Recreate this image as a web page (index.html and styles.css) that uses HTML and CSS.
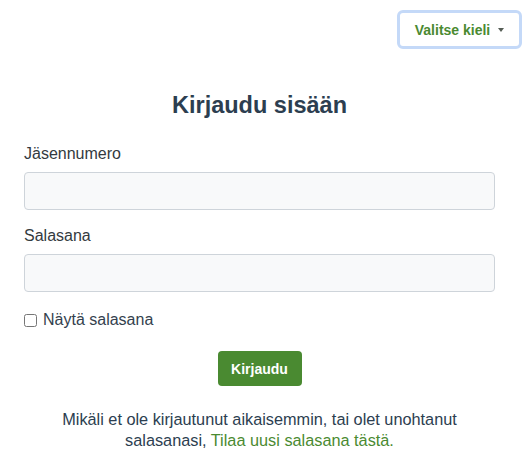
FILE: index.html
```html
<!DOCTYPE html>
<html lang="fi">
<head>
<meta charset="utf-8">
<title>Kirjaudu sisään</title>
<link rel="stylesheet" href="styles.css">
</head>
<body>
<header class="topbar">
  <button class="lang-btn" type="button">Valitse kieli <span class="caret"></span></button>
</header>
<main class="content">
  <h1 class="title">Kirjaudu sisään</h1>
  <form class="login-form">
    <label class="field-label" for="member">Jäsennumero</label>
    <input class="field-input" id="member" type="text">
    <label class="field-label" for="pass">Salasana</label>
    <input class="field-input" id="pass" type="password">
    <label class="check-row"><input class="check-box" type="checkbox"> Näytä salasana</label>
    <div class="submit-row"><button class="submit-btn" type="button">Kirjaudu</button></div>
  </form>
  <p class="note">Mikäli et ole kirjautunut aikaisemmin, tai olet unohtanut<br>salasanasi, <a class="note-link" href="#">Tilaa uusi salasana tästä.</a></p>
</main>
</body>
</html>
```

FILE: styles.css
```css
* { box-sizing: border-box; }
html, body { margin: 0; padding: 0; background: #fff; }
body {
  font-family: "Liberation Sans", Arial, sans-serif;
  color: #2c3e50;
  font-size: 16px;
  width: 531px;
}
.topbar {
  display: flex;
  justify-content: flex-end;
  padding: 10px 9px 0 0;
}
.lang-btn {
  display: flex;
  align-items: center;
  gap: 8px;
  height: 39px;
  width: 125px;
  justify-content: center;
  border: 3px solid #c4d9f8;
  border-radius: 6px;
  background: #fff;
  color: #4a8a31;
  font-family: "Liberation Sans", Arial, sans-serif;
  font-weight: bold;
  font-size: 14px;
  padding: 0 8px;
}
.caret {
  width: 0;
  height: 0;
  border-left: 3.5px solid transparent;
  border-right: 3.5px solid transparent;
  border-top: 4px solid #555d55;
  margin-top: 1px;
}
.content {
  padding: 0 36px 0 24px;
}
.title {
  margin: 41px 0 0;
  text-align: center;
  font-size: 23.5px;
  line-height: 30px;
  font-weight: bold;
  color: #2c3e50;
}
.login-form {
  display: flex;
  flex-direction: column;
  margin-top: 22px;
}
.field-label {
  font-size: 16px;
  line-height: 24px;
  color: #333a40;
  margin-bottom: 6px;
}
.field-input {
  height: 38px;
  border: 1px solid #ced4da;
  border-radius: 4px;
  background: #f8f9fa;
  margin: 0 0 14px;
  font-size: 16px;
}
.check-row {
  display: flex;
  align-items: center;
  gap: 6px;
  font-size: 16px;
  line-height: 24px;
  color: #343f4e;
  margin-top: 2px;
}
.check-box {
  width: 13px;
  height: 13px;
  margin: 0;
}
.submit-row {
  display: flex;
  justify-content: center;
  margin-top: 19px;
}
.submit-btn {
  width: 84px;
  height: 35px;
  border: none;
  border-radius: 4px;
  background: #4a8a31;
  color: #fff;
  font-family: "Liberation Sans", Arial, sans-serif;
  font-weight: bold;
  font-size: 14px;
}
.note {
  margin: 23px 0 0;
  text-align: center;
  font-size: 16.3px;
  line-height: 21px;
  color: #2c3e50;
}
.note-link {
  color: #4a8a31;
  text-decoration: none;
}
```
